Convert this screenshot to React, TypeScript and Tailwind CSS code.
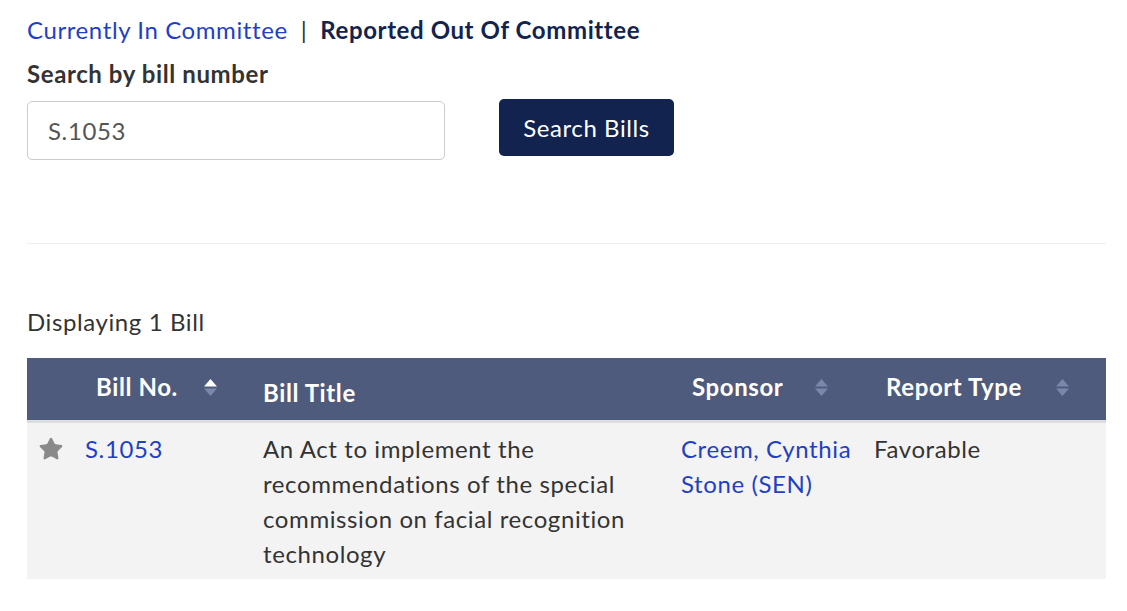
import { Star } from 'lucide-react'

function SortIcon({ active = false }: { active?: boolean }) {
  return (
    <svg width="15" height="19" viewBox="0 0 15 19" className="shrink-0">
      <path d="M7.5 1 L14 8.5 L1 8.5 Z" fill={active ? '#ffffff' : '#7a86ab'} />
      <path d="M1 10.5 L14 10.5 L7.5 18 Z" fill="#7a86ab" />
    </svg>
  )
}

export default function App() {
  return (
    <div
      className="min-h-screen bg-white pl-[27px] pr-[21px] pt-[13px] text-[24px] tracking-[0.6px] text-[#333333]"
      style={{ fontFamily: 'Lato, "Open Sans", Arial, sans-serif' }}
    >
      {/* tabs */}
      <div className="flex items-center leading-[34px]">
        <a className="text-[#1f3fc5]">Currently In Committee</a>
        <span className="mx-[13px] text-[#333]">|</span>
        <span className="font-bold text-[#13234f]">Reported Out Of Committee</span>
      </div>

      <div className="mt-[10px] font-bold leading-[34px]">Search by bill number</div>

      <div className="mt-[10px] flex items-start">
        <div className="flex h-[59px] w-[418px] items-center rounded-[5px] border border-[#cccccc] px-[20px] text-[#555555]">
          S.1053
        </div>
        <button className="ml-[54px] -mt-[2px] h-[57px] w-[175px] rounded-[5px] bg-[#13234f] text-white">
          Search Bills
        </button>
      </div>

      <hr className="mt-[83px] border-t border-[#eeeeee]" />

      <div className="mt-[61px] leading-[34px]">Displaying 1 Bill</div>

      {/* table */}
      <div className="mt-[19px] w-[1079px]">
        <div className="flex h-[62px] bg-[#4f5b7c] font-bold text-white">
          <div className="w-[47px]" />
          <div className="flex w-[178px] items-center pl-[22px] pb-[4px]">
            <span>Bill No.</span>
            <span className="ml-[25px]"><SortIcon active /></span>
          </div>
          <div className="flex w-[418px] items-end pl-[11px] pb-[9px]">Bill Title</div>
          <div className="flex w-[194px] items-center pl-[22px] pb-[4px]">
            <span>Sponsor</span>
            <span className="ml-[31px]"><SortIcon /></span>
          </div>
          <div className="flex flex-1 items-center pl-[22px] pb-[4px]">
            <span>Report Type</span>
            <span className="ml-[33px]"><SortIcon /></span>
          </div>
        </div>
        <div className="h-[3px] bg-[#dddddd]" />
        <div className="flex h-[156px] bg-[#f3f3f3] pt-[8px] leading-[35px]">
          <div className="flex w-[47px] justify-center pt-[5px] pl-[1px]">
            <Star className="h-[26px] w-[26px] text-[#8a8a8a]" fill="#8a8a8a" strokeWidth={1} />
          </div>
          <div className="w-[178px] pl-[11px] text-[#1f3fc5]">S.1053</div>
          <div className="w-[418px] pl-[11px]">
            An Act to implement the
            <br />
            recommendations of the special
            <br />
            commission on facial recognition
            <br />
            technology
          </div>
          <div className="w-[194px] pl-[11px] text-[#1f3fc5]">
            Creem, Cynthia
            <br />
            Stone (SEN)
          </div>
          <div className="flex-1 pl-[10px]">Favorable</div>
        </div>
      </div>
    </div>
  )
}
